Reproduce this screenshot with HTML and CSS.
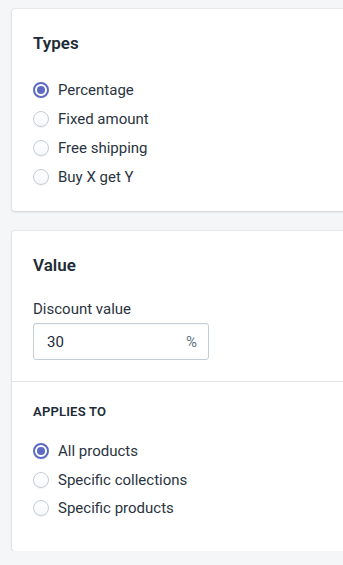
FILE: index.html
```html
<!DOCTYPE html>
<html lang="en">
<head>
<meta charset="utf-8">
<link rel="stylesheet" href="styles.css">
</head>
<body>
<div class="page">
  <section class="card">
    <div class="section">
      <h2 class="heading">Types</h2>
      <ul class="choices">
        <li class="choice"><span class="radio checked"></span><span class="label">Percentage</span></li>
        <li class="choice"><span class="radio"></span><span class="label">Fixed amount</span></li>
        <li class="choice"><span class="radio"></span><span class="label">Free shipping</span></li>
        <li class="choice"><span class="radio"></span><span class="label">Buy X get Y</span></li>
      </ul>
    </div>
  </section>
  <section class="card">
    <div class="section first">
      <h2 class="heading">Value</h2>
      <div class="field">
        <label class="field-label">Discount value</label>
        <div class="input">
          <span class="input-value">30</span>
          <span class="suffix">%</span>
        </div>
      </div>
    </div>
    <div class="section divided">
      <h3 class="subheading">APPLIES TO</h3>
      <ul class="choices">
        <li class="choice"><span class="radio checked"></span><span class="label">All products</span></li>
        <li class="choice"><span class="radio"></span><span class="label">Specific collections</span></li>
        <li class="choice"><span class="radio"></span><span class="label">Specific products</span></li>
      </ul>
    </div>
  </section>
</div>
</body>
</html>
```
FILE: styles.css
```css
html, body {
  margin: 0;
  padding: 0;
  background: #f4f6f8;
  overflow: hidden;
}
body {
  font-family: Roboto, "Noto Sans", sans-serif;
  color: #212b36;
  -webkit-font-smoothing: antialiased;
}
.page {
  display: flex;
  flex-direction: column;
  gap: 20px;
  padding: 9px 0 0 12px;
  width: 380px;
}
.card {
  background: #fff;
  border-radius: 3px;
  box-shadow: 0 0 0 1px rgba(63, 63, 68, 0.05), 0 1px 3px 0 rgba(63, 63, 68, 0.15);
}
.section {
  padding: 20px 21px;
}
.section.first {
  padding-bottom: 21px;
}
.divided {
  border-top: 1px solid #dfe3e8;
  padding-top: 22px;
  padding-bottom: 28px;
}
.heading {
  margin: 0;
  font-size: 17px;
  line-height: 24px;
  font-weight: 600;
  padding-top: 2px;
}
.subheading {
  margin: 0;
  font-size: 13px;
  line-height: 16px;
  font-weight: 600;
  letter-spacing: 0.2px;
}
.choices {
  list-style: none;
  margin: 20px 0 0;
  padding: 0;
  display: flex;
  flex-direction: column;
}
.divided .choices {
  margin-top: 17px;
}
.choice {
  display: flex;
  align-items: center;
  gap: 9px;
  height: 29px;
  font-size: 15px;
  color: #2a3440;
}
.divided .choice {
  height: 28.5px;
}
.radio {
  box-sizing: border-box;
  width: 16px;
  height: 16px;
  border-radius: 50%;
  border: 1px solid #c4cdd5;
  background: linear-gradient(180deg, #fff, #f6f8fa);
  box-shadow: 0 1px 0 0 rgba(22, 29, 37, 0.05);
  flex: none;
  position: relative;
}
.radio.checked {
  border: 2px solid #5c6ac4;
  background: #fff;
}
.radio.checked::after {
  content: "";
  position: absolute;
  left: 50%;
  top: 50%;
  width: 8px;
  height: 8px;
  margin: -4px 0 0 -4px;
  border-radius: 50%;
  background: #5c6ac4;
}
.field {
  margin-top: 22px;
  display: flex;
  flex-direction: column;
  gap: 4px;
}
.field-label {
  font-size: 15px;
  line-height: 20px;
  color: #2a3440;
}
.input {
  box-sizing: border-box;
  width: 176px;
  height: 37px;
  border: 1px solid #c4cdd5;
  border-radius: 3px;
  display: flex;
  align-items: center;
  justify-content: space-between;
  padding: 0 11px 0 13px;
  font-size: 15px;
  box-shadow: inset 0 1px 0 0 rgba(99, 115, 129, 0.05);
}
.suffix {
  color: #637381;
}
```
